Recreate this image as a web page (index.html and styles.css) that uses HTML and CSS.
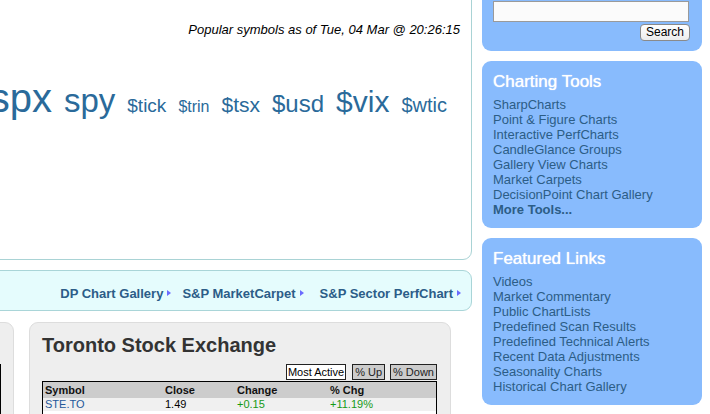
FILE: index.html
```html
<!DOCTYPE html>
<html>
<head>
<meta charset="utf-8">
<link rel="stylesheet" href="styles.css">
</head>
<body>
<div class="page">
  <div class="main">
    <div class="panel">
      <div class="popular">Popular symbols as of Tue, 04 Mar @ 20:26:15</div>
      <div class="symbols">
        <a class="sym s40">$spx</a>
        <a class="sym s33">spy</a>
        <a class="sym s19">$tick</a>
        <a class="sym s16">$trin</a>
        <a class="sym s21">$tsx</a>
        <a class="sym s24">$usd</a>
        <a class="sym s30">$vix</a>
        <a class="sym s20">$wtic</a>
      </div>
    </div>
    <div class="navbar">
      <a class="navlink">DP Chart Gallery<span class="tri"></span></a>
      <a class="navlink">S&amp;P MarketCarpet<span class="tri"></span></a>
      <a class="navlink wide">S&amp;P Sector PerfChart<span class="tri"></span></a>
    </div>
    <div class="lower">
      <div class="leftbox"><div class="lefttable"></div></div>
      <div class="tsx">
        <div class="tsx-title">Toronto Stock Exchange</div>
        <div class="tabs">
          <span class="tab active">Most Active</span>
          <span class="tab">% Up</span>
          <span class="tab">% Down</span>
        </div>
        <table class="quotes">
          <tr class="head"><th class="c1">Symbol</th><th class="c2">Close</th><th class="c3">Change</th><th class="c4">% Chg</th></tr>
          <tr class="odd"><td class="sym-cell">STE.TO</td><td>1.49</td><td class="up">+0.15</td><td class="up">+11.19%</td></tr>
          <tr><td class="sym-cell">&nbsp;</td><td></td><td></td><td></td></tr>
        </table>
      </div>
    </div>
  </div>
  <div class="side">
    <div class="sbox search">
      <input class="sinput" type="text">
      <div class="sbtn-row"><button class="sbtn">Search</button></div>
    </div>
    <div class="sbox links-box">
      <div class="stitle">Charting Tools</div>
      <ul class="slinks">
        <li>SharpCharts</li>
        <li>Point &amp; Figure Charts</li>
        <li>Interactive PerfCharts</li>
        <li>CandleGlance Groups</li>
        <li>Gallery View Charts</li>
        <li>Market Carpets</li>
        <li>DecisionPoint Chart Gallery</li>
        <li class="more">More Tools...</li>
      </ul>
    </div>
    <div class="sbox links-box">
      <div class="stitle">Featured Links</div>
      <ul class="slinks">
        <li>Videos</li>
        <li>Market Commentary</li>
        <li>Public ChartLists</li>
        <li>Predefined Scan Results</li>
        <li>Predefined Technical Alerts</li>
        <li>Recent Data Adjustments</li>
        <li>Seasonality Charts</li>
        <li>Historical Chart Gallery</li>
      </ul>
    </div>
  </div>
</div>
</body>
</html>
```
FILE: styles.css
```css
html, body {
  margin: 0;
  padding: 0;
  background: #ffffff;
  overflow: hidden;
  width: 710px;
  height: 414px;
}
body {
  font-family: "Liberation Sans", Arial, Helvetica, sans-serif;
  color: #000;
}
.page {
  display: flex;
  gap: 10px;
  align-items: flex-start;
}
.main {
  flex: 0 0 472px;
  width: 472px;
}
.panel {
  margin-top: -20px;
  margin-left: -200px;
  height: 280px;
  box-sizing: border-box;
  border: 1px solid #a9d3d5;
  border-radius: 0 0 9px 0;
  padding-top: 41px;
  background: #fff;
}
.popular {
  font-style: italic;
  font-size: 13px;
  line-height: 16px;
  text-align: right;
  padding-right: 11px;
}
.symbols {
  margin-top: 40px;
  display: flex;
  align-items: baseline;
  justify-content: flex-end;
  gap: 12px;
  padding-right: 24px;
}
.sym {
  color: #2a6a9a;
  line-height: 40px;
  white-space: nowrap;
}
.s40 { font-size: 40px; }
.s33 { font-size: 33px; }
.s30 { font-size: 30px; }
.s24 { font-size: 24px; }
.s21 { font-size: 21px; }
.s20 { font-size: 20px; }
.s19 { font-size: 19px; }
.s16 { font-size: 16px; }

.navbar {
  margin-top: 10px;
  margin-left: -200px;
  height: 41px;
  box-sizing: border-box;
  border: 1px solid #a9d5d8;
  border-radius: 0 9px 9px 0;
  background: #e5fcfd;
  display: flex;
  align-items: center;
  justify-content: flex-end;
  padding-right: 10px;
  padding-top: 5px;
}
.navlink {
  font-weight: bold;
  font-size: 13px;
  color: #2c5d88;
  margin-left: 11px;
  display: flex;
  align-items: center;
  white-space: nowrap;
}
.navlink.wide { margin-left: 16px; }
.tri {
  display: inline-block;
  width: 0;
  height: 0;
  margin-left: 4px;
  border-top: 3.5px solid transparent;
  border-bottom: 3.5px solid transparent;
  border-left: 4px solid #6b6bff;
}

.lower {
  margin-top: 11px;
  display: flex;
  justify-content: flex-end;
  gap: 15px;
  padding-right: 21px;
}
.leftbox {
  flex: 0 0 200px;
  height: 120px;
  box-sizing: border-box;
  background: #eeeeee;
  border: 1px solid #dddddd;
  border-radius: 9px;
  padding-top: 41px;
  padding-right: 12px;
}
.lefttable {
  height: 100px;
  border: 1px solid #000;
  background: #fff;
}
.tsx {
  flex: 0 0 422px;
  height: 120px;
  box-sizing: border-box;
  background: #eeeeee;
  border: 1px solid #dddddd;
  border-radius: 9px;
  padding: 10px 13px 0 12px;
}
.tsx-title {
  font-size: 20px;
  font-weight: bold;
  line-height: 24px;
  color: #333333;
}
.tabs {
  margin-top: 7px;
  display: flex;
  justify-content: flex-end;
  gap: 5px;
  padding-right: 0;
}
.tab {
  font-size: 11px;
  line-height: 14px;
  padding: 0 2px;
  border: 1px solid #222;
  background: #cccccc;
  color: #222;
}
.tab.active {
  background: #ffffff;
  color: #000;
  padding: 0 1px;
  margin-right: 1px;
}
.quotes {
  width: 395px;
  border-collapse: collapse;
  border: 1px solid #000;
  font-size: 11px;
  margin-top: 1px;
  background: #fff;
}
.quotes th {
  text-align: left;
  font-weight: bold;
  background: #cccccc;
  height: 16px;
  padding: 0 2px;
  color: #111;
}
.quotes td {
  height: 13px;
  padding: 0 2px;
  line-height: 13px;
}
.quotes .c1 { width: 116px; }
.quotes .c2 { width: 68px; }
.quotes .c3 { width: 89px; }
.quotes tr.odd td { background: #f0f0f0; }
.sym-cell { color: #24589a; }
.up { color: #159a15; }

.side {
  flex: 0 0 220px;
  width: 220px;
}
.sbox {
  background: #88bbfd;
  border-radius: 9px;
  box-sizing: border-box;
}
.search {
  margin-top: -20px;
  padding: 21px 12px 10px 11px;
}
.sinput {
  display: block;
  width: 196px;
  height: 21px;
  box-sizing: border-box;
  border: 1px solid #9a9a9a;
  background: #fbfbfb;
  margin: 0;
  padding: 0;
}
.sbtn-row {
  display: flex;
  justify-content: flex-end;
  margin-top: 2px;
  padding-right: 0;
}
.sbtn {
  font-family: "Liberation Sans", Arial, sans-serif;
  font-size: 12px;
  height: 17px;
  width: 50px;
  padding: 0;
  margin: 0;
  border: 1px solid #8a8a8a;
  border-radius: 4px;
  background: linear-gradient(#ffffff, #ececec);
  color: #000;
  line-height: 15px;
}
.links-box {
  margin-top: 10px;
  padding: 11px 11px 11px 11px;
}
.stitle {
  color: #ffffff;
  font-size: 17px;
  line-height: 20px;
  text-shadow: 0 0 1px #ffffff;
}
.slinks {
  list-style: none;
  margin: 5px 0 0 0;
  padding: 0;
}
.slinks li {
  font-size: 13px;
  line-height: 15px;
  color: #2c5d86;
  white-space: nowrap;
}
.slinks li.more {
  font-weight: bold;
}
```
